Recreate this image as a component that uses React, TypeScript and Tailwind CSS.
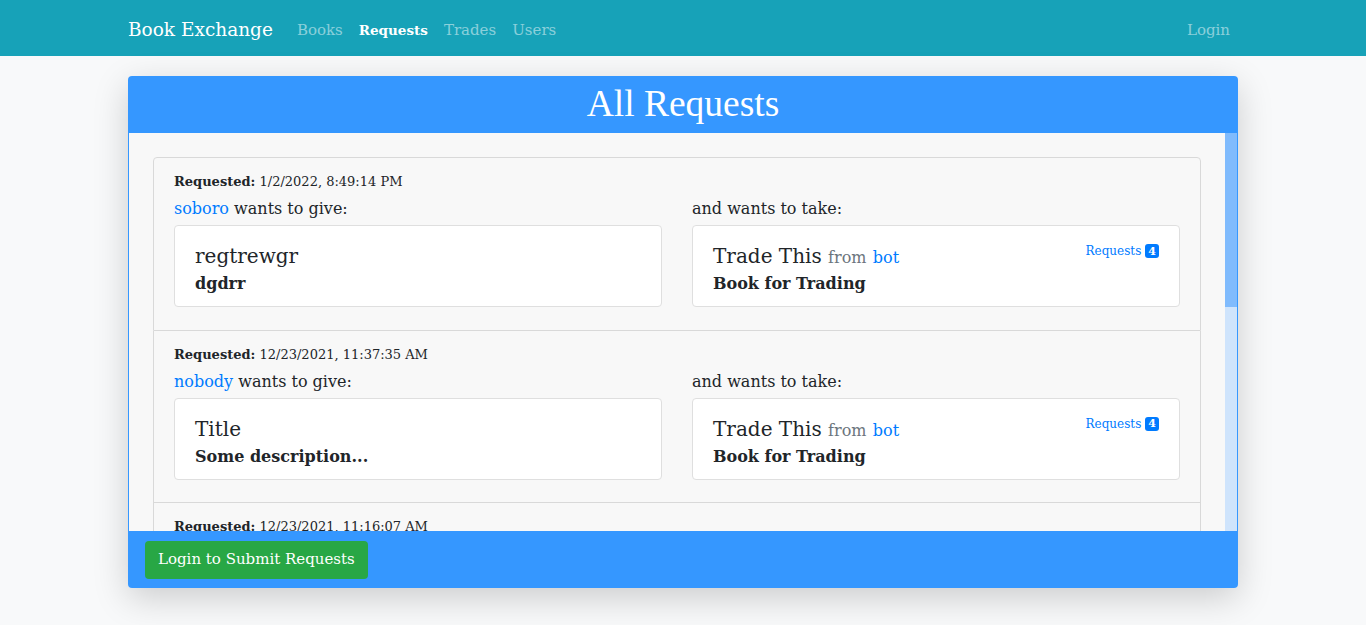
import React from 'react';

type Request = {
  date: string;
  user: string;
  title: string;
  desc: string;
};

const requests: Request[] = [
  { date: '1/2/2022, 8:49:14 PM', user: 'soboro', title: 'regtrewgr', desc: 'dgdrr' },
  { date: '12/23/2021, 11:37:35 AM', user: 'nobody', title: 'Title', desc: 'Some description...' },
  { date: '12/23/2021, 11:16:07 AM', user: 'nobody', title: 'Another Book', desc: 'Some description...' },
  { date: '12/22/2021, 9:02:41 PM', user: 'soboro', title: 'Test Book', desc: 'testing' },
  { date: '12/20/2021, 4:15:22 PM', user: 'nobody', title: 'Title', desc: 'Some description...' },
];

function BookCard({ children }: { children: React.ReactNode }) {
  return <div className="mt-[4px] rounded-[4px] border border-[#dfdfdf] bg-white px-[20px] pb-[10px] pt-[15px]">{children}</div>;
}

function RequestItem({ req, first }: { req: Request; first: boolean }) {
  return (
    <div className={`border-x border-b border-[#d9d9d9] px-[20px] pb-[22.5px] pt-[14px] ${first ? 'rounded-t-[4px] border-t' : ''}`}>
      <p className="text-[13px] leading-[20px]">
        <span className="font-bold">Requested:</span> {req.date}
      </p>
      <div className="mt-[5px] grid grid-cols-2 gap-[30px]">
        <div>
          <p className="text-[16px] leading-[24px]">
            <a className="text-[#007bff]">{req.user}</a> wants to give:
          </p>
          <BookCard>
            <h5 className="text-[20px] leading-[30px]">{req.title}</h5>
            <p className="mt-[1px] text-[16px] font-bold leading-[24px]">{req.desc}</p>
          </BookCard>
        </div>
        <div>
          <p className="text-[16px] leading-[24px]">and wants to take:</p>
          <BookCard>
            <div className="flex h-[30px] items-start justify-between">
              <h5 className="text-[20px] leading-[30px]">
                Trade This <span className="text-[16px] leading-none text-[#6c757d]">from</span>{' '}
                <a className="text-[16px] leading-none text-[#007bff]">bot</a>
              </h5>
              <a className="mt-[1px] flex items-center gap-[4px] text-[12px] leading-[18px] text-[#007bff]">
                Requests
                <span className="flex h-[14px] min-w-[13px] items-center justify-center rounded-[3px] bg-[#007bff] px-[3px] text-[11px] font-bold leading-none text-white">
                  4
                </span>
              </a>
            </div>
            <p className="mt-[1px] text-[16px] font-bold leading-[24px]">Book for Trading</p>
          </BookCard>
        </div>
      </div>
    </div>
  );
}

export default function App() {
  return (
    <div className="min-h-[625px] bg-[#f8f9fa] font-['DejaVu_Serif',serif] text-[#212529]">
      <nav className="h-[56px] bg-[#17a2b8]">
        <div className="mx-auto flex h-full w-[1110px] items-center pt-[4px]">
          <a className="mr-[16px] text-[18.5px] text-white">Book Exchange</a>
          <ul className="flex flex-1 items-center text-[15px]">
            <li className="px-[8px] text-white/50">Books</li>
            <li className="px-[8px] text-[13.5px] font-bold text-white">Requests</li>
            <li className="px-[8px] text-white/50">Trades</li>
            <li className="px-[8px] text-white/50">Users</li>
          </ul>
          <a className="px-[8px] text-[15px] text-white/50">Login</a>
        </div>
      </nav>

      <div className="mx-auto mt-[20px] flex w-[1110px] flex-col overflow-hidden rounded-[4px] shadow-[0_10px_35px_rgba(0,0,0,0.18)]">
        <div className="flex h-[57px] items-center justify-center bg-[#3597ff]">
          <h2 className="-mt-[2px] font-['Liberation_Serif',serif] text-[37.5px] leading-none text-white">All Requests</h2>
        </div>
        <div className="flex h-[398px] border-x border-[#3597ff] bg-[#f8f8f8]">
          <div className="flex-1 overflow-hidden p-[24px]">
            <div className="rounded-[4px]">
              {requests.map((r, i) => (
                <RequestItem key={i} req={r} first={i === 0} />
              ))}
            </div>
          </div>
          <div className="w-[12px] bg-[#cfe4fc]">
            <div className="h-[174px] bg-[#80bbfd]" />
          </div>
        </div>
        <div className="flex h-[57px] items-center bg-[#3597ff] px-[17px]">
          <button className="h-[38px] rounded-[4px] bg-[#28a745] px-[13px] text-[15px] text-white">Login to Submit Requests</button>
        </div>
      </div>
    </div>
  );
}
